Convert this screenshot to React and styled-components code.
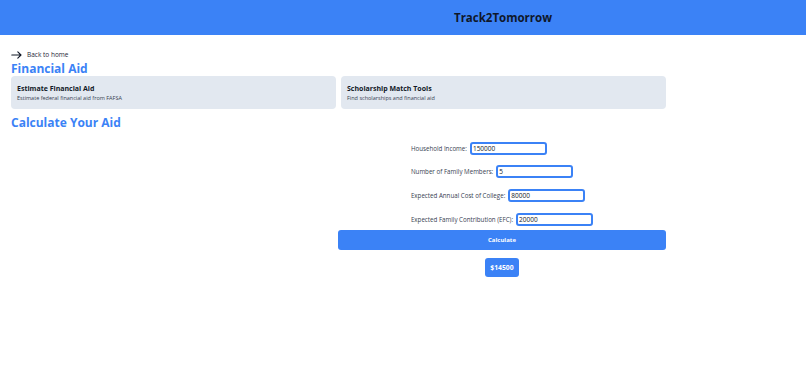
import React from "react";
import styled, { createGlobalStyle } from "styled-components";

const GlobalStyle = createGlobalStyle`
  body {
    margin: 0;
    background: #ffffff;
    font-family: "Open Sans", "Noto Sans", sans-serif;
  }
`;

const Header = styled.header`
  height: 35px;
  background: #3b82f6;
  display: grid;
  grid-template-columns: 339px 328px;
  align-items: center;
`;

const Brand = styled.h1`
  grid-column: 2;
  margin: 0 0 1px;
  font-size: 11.5px;
  font-weight: 700;
  color: #0f172a;
  text-align: center;
`;

const Main = styled.main`
  width: 656px;
  padding: 14px 0 0 11px;
`;

const BackLink = styled.a`
  display: flex;
  align-items: center;
  gap: 5px;
  font-size: 6.5px;
  color: #1f2937;
  text-decoration: none;
  height: 11px;
  margin-bottom: 2px;
`;

const Title = styled.h2`
  margin: 0;
  font-size: 12px;
  line-height: 14px;
  font-weight: 700;
  color: #3b82f6;
`;

const Cards = styled.div`
  display: grid;
  grid-template-columns: 325px 325px;
  gap: 5px;
  margin-bottom: 7px;
`;

const Card = styled.div`
  background: #e2e8f0;
  border-radius: 4px;
  height: 33px;
  padding: 7px 6px 0;
  box-sizing: border-box;
`;

const CardTitle = styled.div`
  font-size: 7px;
  font-weight: 700;
  color: #111827;
  line-height: 11px;
`;

const CardText = styled.div`
  font-size: 5.5px;
  color: #374151;
  line-height: 8px;
`;

const Calc = styled.section`
  display: grid;
  grid-template-columns: 328px 328px;
`;

const Panel = styled.div`
  grid-column: 2;
  margin-left: -2px;
  display: flex;
  flex-direction: column;
  align-items: center;
  padding-top: 11.5px;
`;

const Form = styled.div`
  display: flex;
  flex-direction: column;
  gap: 10.7px;
  margin-bottom: 4.5px;
`;

const Row = styled.label`
  display: flex;
  align-items: center;
  gap: 3px;
  font-size: 6.2px;
  color: #374151;
`;

const Input = styled.input`
  width: 77px;
  height: 13px;
  box-sizing: border-box;
  border: 2px solid #3b82f6;
  border-radius: 3px;
  padding: 0 1px;
  font-family: "Open Sans", sans-serif;
  font-size: 6.5px;
  color: #111827;
  outline: none;
`;

const Button = styled.button`
  width: 328px;
  height: 20px;
  border: none;
  border-radius: 3px;
  background: #3b82f6;
  color: #ffffff;
  font-family: "Open Sans", sans-serif;
  font-size: 6px;
  font-weight: 700;
`;

const Result = styled.div`
  margin-top: 8px;
  padding: 0 5px;
  height: 19px;
  line-height: 19px;
  border-radius: 3px;
  background: #3b82f6;
  color: #ffffff;
  font-size: 6.8px;
  font-weight: 700;
`;

const Arrow = () => (
  <svg width="11" height="8" viewBox="0 0 11 8" fill="none" stroke="#111827" strokeWidth="1.1" strokeLinecap="round" strokeLinejoin="round">
    <path d="M0.8 4h9.2M6.8 0.8 10 4 6.8 7.2" />
  </svg>
);

const fields = [
  { label: "Household Income:", value: "150000" },
  { label: "Number of Family Members:", value: "5" },
  { label: "Expected Annual Cost of College:", value: "80000" },
  { label: "Expected Family Contribution (EFC):", value: "20000" },
];

export default function App() {
  return (
    <>
      <GlobalStyle />
      <Header>
        <Brand>Track2Tomorrow</Brand>
      </Header>
      <Main>
        <BackLink href="#">
          <Arrow />
          Back to home
        </BackLink>
        <Title>Financial Aid</Title>
        <Cards>
          <Card>
            <CardTitle>Estimate Financial Aid</CardTitle>
            <CardText>Estimate federal financial aid from FAFSA</CardText>
          </Card>
          <Card>
            <CardTitle>Scholarship Match Tools</CardTitle>
            <CardText>Find scholarships and financial aid</CardText>
          </Card>
        </Cards>
        <Title>Calculate Your Aid</Title>
        <Calc>
          <Panel>
            <Form>
              {fields.map((f) => (
                <Row key={f.label}>
                  {f.label}
                  <Input defaultValue={f.value} />
                </Row>
              ))}
            </Form>
            <Button>Calculate</Button>
            <Result>$14500</Result>
          </Panel>
        </Calc>
      </Main>
    </>
  );
}
